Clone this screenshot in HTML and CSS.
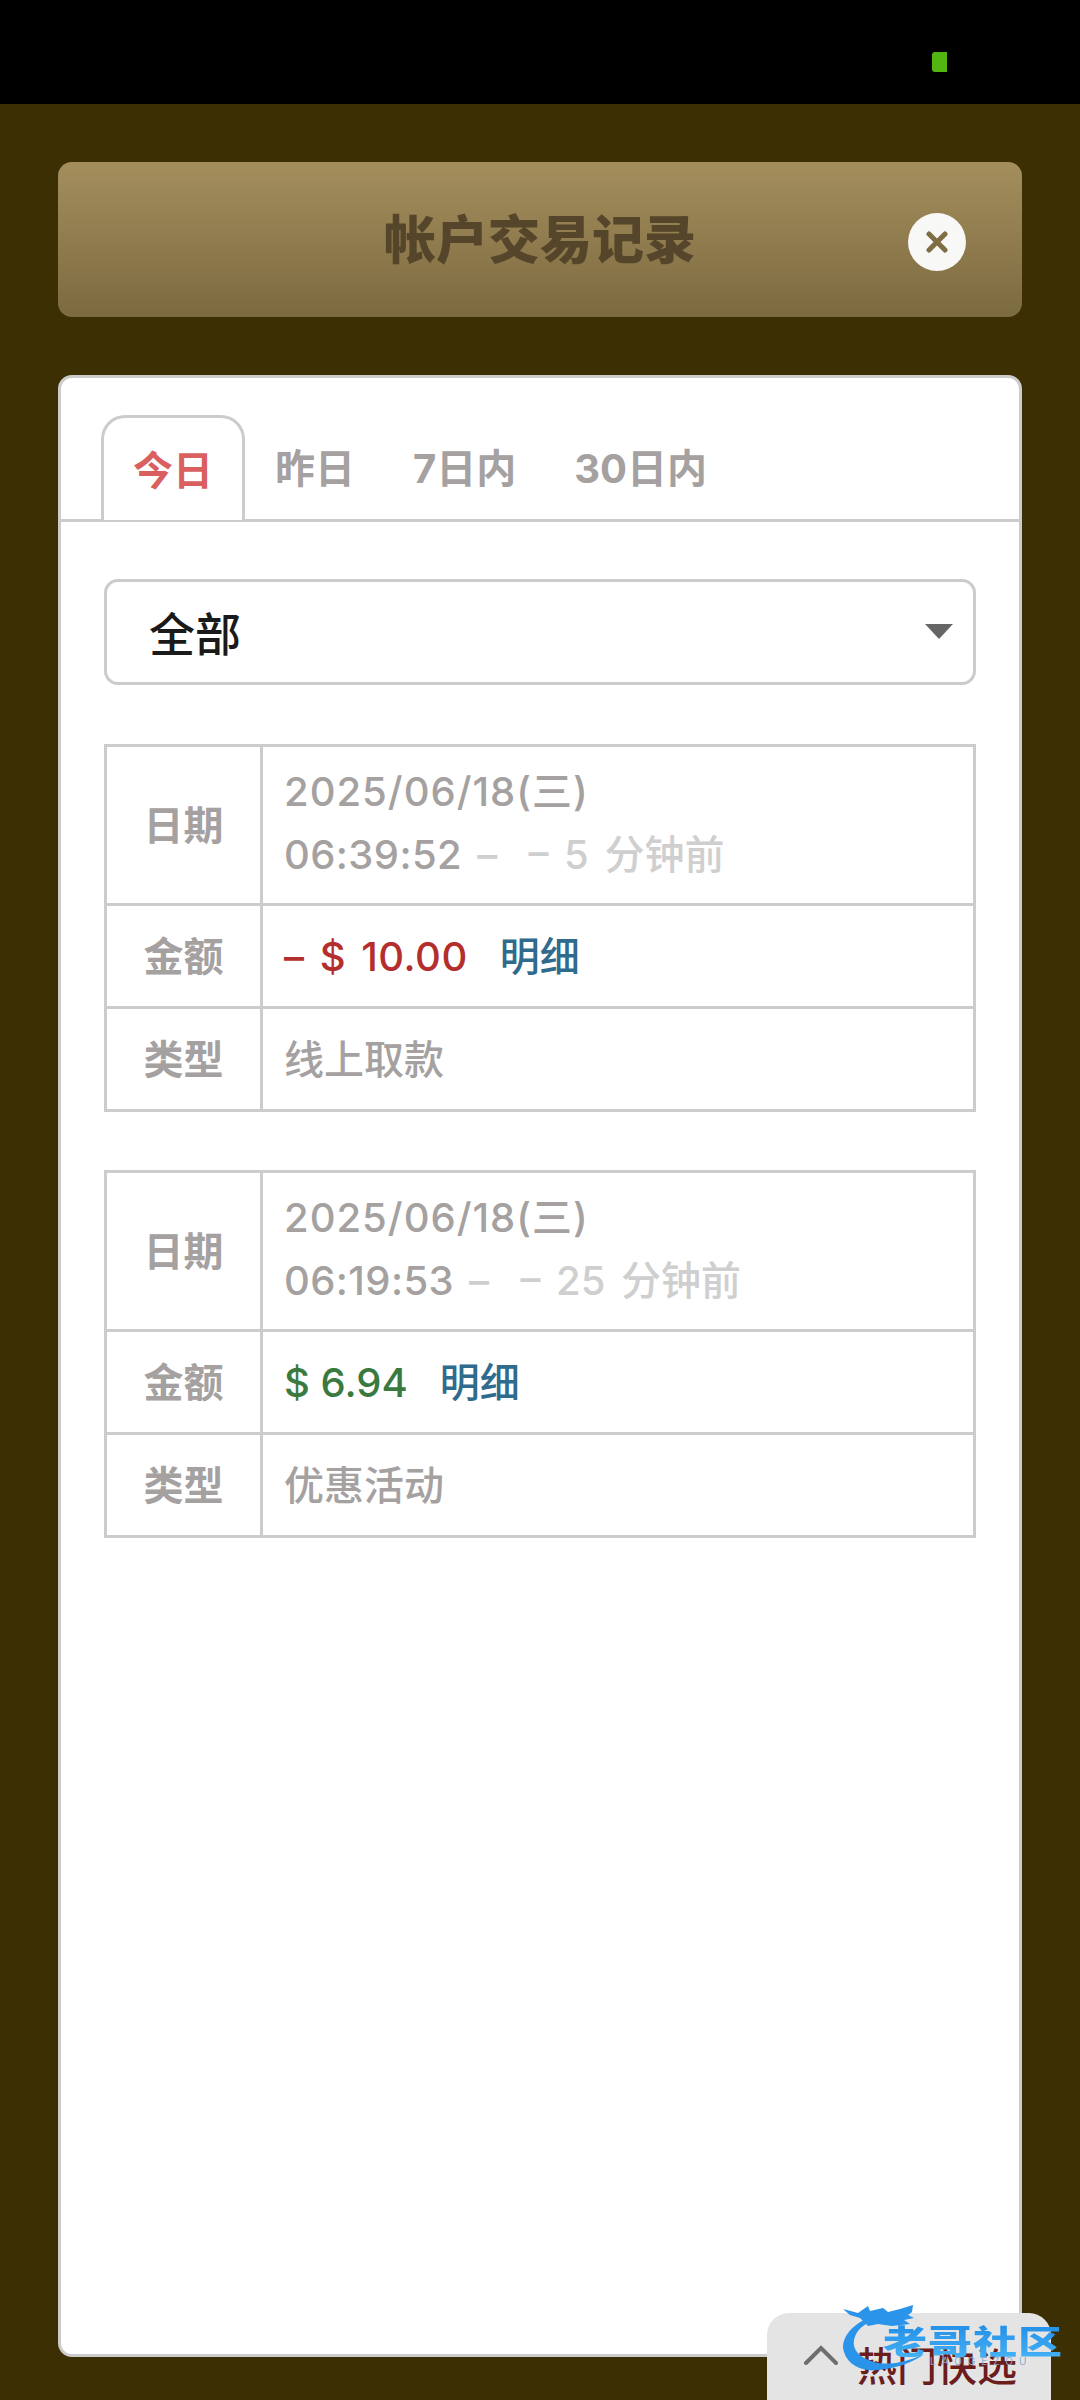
FILE: index.html
```html
<!DOCTYPE html>
<html lang="zh-CN">
<head>
    <meta charset="UTF-8">
    <meta name="viewport" content="width=device-width, initial-scale=1.0">
    <title>帐户交易记录</title>
    <link rel="stylesheet" href="styles.css">
</head>
<body>
    <div class="status-bar"><span class="status-dot"></span></div>

    <div class="page">
        <div class="page-header">
            <h1>帐户交易记录</h1>
            <button class="close-btn" aria-label="关闭">
                <svg width="22" height="22" viewBox="0 0 22 22"><path d="M3 3L19 19M19 3L3 19" stroke="#7f6d43" stroke-width="5" stroke-linecap="round"/></svg>
            </button>
        </div>

        <div class="card">
            <div class="tabs">
                <div class="tab active">今日</div>
                <div class="tab">昨日</div>
                <div class="tab">7日内</div>
                <div class="tab">30日内</div>
            </div>

            <div class="card-body">
                <div class="select-box">
                    <span>全部</span>
                    <span class="select-arrow"></span>
                </div>

                <table class="record">
                    <tr class="row-date">
                        <th>日期</th>
                        <td>
                            <div class="date-line">2025/06/18(三)</div>
                            <div class="time-line">06:39:52<span class="ago">–&nbsp;&nbsp;– 5 分钟前</span></div>
                        </td>
                    </tr>
                    <tr class="row-plain">
                        <th>金额</th>
                        <td><span class="minus">– $ 10.00</span><a class="detail">明细</a></td>
                    </tr>
                    <tr class="row-plain">
                        <th>类型</th>
                        <td>线上取款</td>
                    </tr>
                </table>

                <table class="record">
                    <tr class="row-date">
                        <th>日期</th>
                        <td>
                            <div class="date-line">2025/06/18(三)</div>
                            <div class="time-line">06:19:53<span class="ago">–&nbsp;&nbsp;– 25 分钟前</span></div>
                        </td>
                    </tr>
                    <tr class="row-plain">
                        <th>金额</th>
                        <td><span class="plus">$ 6.94</span><a class="detail">明细</a></td>
                    </tr>
                    <tr class="row-plain">
                        <th>类型</th>
                        <td>优惠活动</td>
                    </tr>
                </table>
            </div>
        </div>
    </div>

    <!-- Bottom drawer tab -->
    <div class="quick-tab">
        <svg width="36" height="20" viewBox="0 0 36 20"><path d="M3 18L18 3L33 18" fill="none" stroke="#6e6e6e" stroke-width="4" stroke-linecap="round"/></svg>
        <span>热门快选</span>
    </div>

    <!-- Forum watermark -->
    <div class="watermark">
        <svg class="dragon" width="90" height="75" viewBox="0 0 90 75">
            <path d="M30 18C12 26 2 40 6 52C10 66 26 72 40 70C60 68 76 62 86 54C70 62 50 66 36 62C22 58 14 50 16 40C18 30 26 24 36 20Z" fill="#2a93ea"/>
            <path d="M5 9L20 13L30 6L32 11L45 8L50 12L62 9L75 5L74 12L70 15L76 18L66 20L72 24L54 26L40 24L30 26L22 18L12 15Z" fill="#2a93ea"/>
        </svg>
        <span class="wm-text">老哥社区</span>
        <span class="wm-small">LAOGEZOU</span>
    </div>
</body>
</html>
```

FILE: styles.css
```css
* {
    margin: 0;
    padding: 0;
    box-sizing: border-box;
    font-family: Inter, "Noto Sans CJK SC", sans-serif;
}

body {
    width: 1080px;
    height: 2400px;
    overflow: hidden;
    position: relative;
    background-color: #3d2f04;
}

.status-bar {
    height: 104px;
    background-color: #000;
    display: flex;
    justify-content: flex-end;
    padding: 52px 133px 0 0;
}

.status-dot {
    width: 15px;
    height: 20px;
    background-color: #52b512;
    border-radius: 3px 0 0 3px;
}

.page {
    padding: 58px 58px 0;
}

.page-header {
    height: 155px;
    border-radius: 14px;
    background: linear-gradient(#a48e5c, #7c6a40);
    display: flex;
    align-items: center;
    justify-content: center;
    position: relative;
}

.page-header h1 {
    font-size: 52px;
    font-weight: 900;
    color: #55452a;
    line-height: 1;
    margin-bottom: -2px;
}

.close-btn {
    position: absolute;
    right: 56px;
    top: 51px;
    width: 58px;
    height: 58px;
    border: none;
    border-radius: 50%;
    background-color: #f8f8f6;
    display: flex;
    align-items: center;
    justify-content: center;
}

.card {
    margin-top: 58px;
    height: 1982px;
    background-color: #fff;
    border: 3px solid #cccccc;
    border-radius: 14px;
}

.tabs {
    display: flex;
    padding: 37px 0 0 40px;
    height: 144px;
    border-bottom: 3px solid #cccccc;
}

.tab {
    height: 105px;
    padding: 0 29px;
    font-size: 40px;
    font-weight: 700;
    line-height: 107px;
    color: #a5a1a1;
}

.tab.active {
    margin-right: 1px;
    line-height: 105px;
    color: #d9605f;
    background-color: #fff;
    border: 3px solid #cccccc;
    border-bottom: none;
    border-radius: 24px 24px 0 0;
}

.card-body {
    padding: 57px 43px 0;
}

.select-box {
    height: 106px;
    border: 3px solid #cccccc;
    border-radius: 14px;
    padding: 0 42px 2px;
    display: flex;
    align-items: center;
    justify-content: space-between;
    font-size: 46px;
    font-weight: 500;
    color: #1a1a1a;
}

.select-arrow {
    width: 0;
    height: 0;
    margin-right: -22px;
    border-left: 14px solid transparent;
    border-right: 14px solid transparent;
    border-top: 15px solid #666;
}

.record {
    width: 100%;
    margin-top: 59px;
    border-collapse: collapse;
    border: 3px solid #cccccc;
    font-size: 40px;
    color: #a5a1a1;
}

.record + .record {
    margin-top: 58px;
}

.record th,
.record td {
    border: 3px solid #cccccc;
}

.record th {
    width: 156px;
    font-weight: 700;
    padding-bottom: 5px;
}

.record td {
    padding: 0 21px 4px;
    font-weight: 500;
}

.row-date {
    height: 159px;
}

.row-date td {
    line-height: 63px;
}

.row-plain {
    height: 103px;
}

.date-line {
    letter-spacing: 1px;
}

.time-line {
    letter-spacing: 0.4px;
}

.ago {
    margin-left: 15px;
    word-spacing: 5px;
    letter-spacing: 0;
    color: #cfcfcf;
}

.minus {
    word-spacing: 4px;
    letter-spacing: 0.5px;
    color: #b52e2e;
}

.plus {
    color: #3a7a3f;
}

.detail {
    margin-left: 32px;
    color: #2f6b8c;
}

.quick-tab {
    position: absolute;
    left: 767px;
    top: 2313px;
    width: 284px;
    height: 87px;
    padding: 26px 0 0 36px;
    display: flex;
    align-items: flex-start;
    gap: 18px;
    background-color: #e4e4e4;
    border-radius: 22px 22px 0 0;
    font-size: 40px;
    font-weight: 500;
    line-height: 56px;
    color: #6b1c1c;
}

.quick-tab svg {
    margin-top: 6px;
}

.watermark {
    position: absolute;
    left: 838px;
    top: 2300px;
    width: 242px;
    height: 100px;
}

.dragon {
    position: absolute;
    left: 0;
    top: 0;
}

.wm-text {
    position: absolute;
    left: 45px;
    top: 14px;
    font-size: 44px;
    font-weight: 900;
    line-height: 56px;
    letter-spacing: 1px;
    white-space: nowrap;
    color: transparent;
    background: linear-gradient(#1f8be6, #4ab6f6);
    -webkit-background-clip: text;
    background-clip: text;
    transform: scaleY(0.75);
}

.wm-small {
    position: absolute;
    left: 92px;
    top: 55px;
    font-size: 10px;
    letter-spacing: 6px;
    color: #8fa9c9;
}
```
